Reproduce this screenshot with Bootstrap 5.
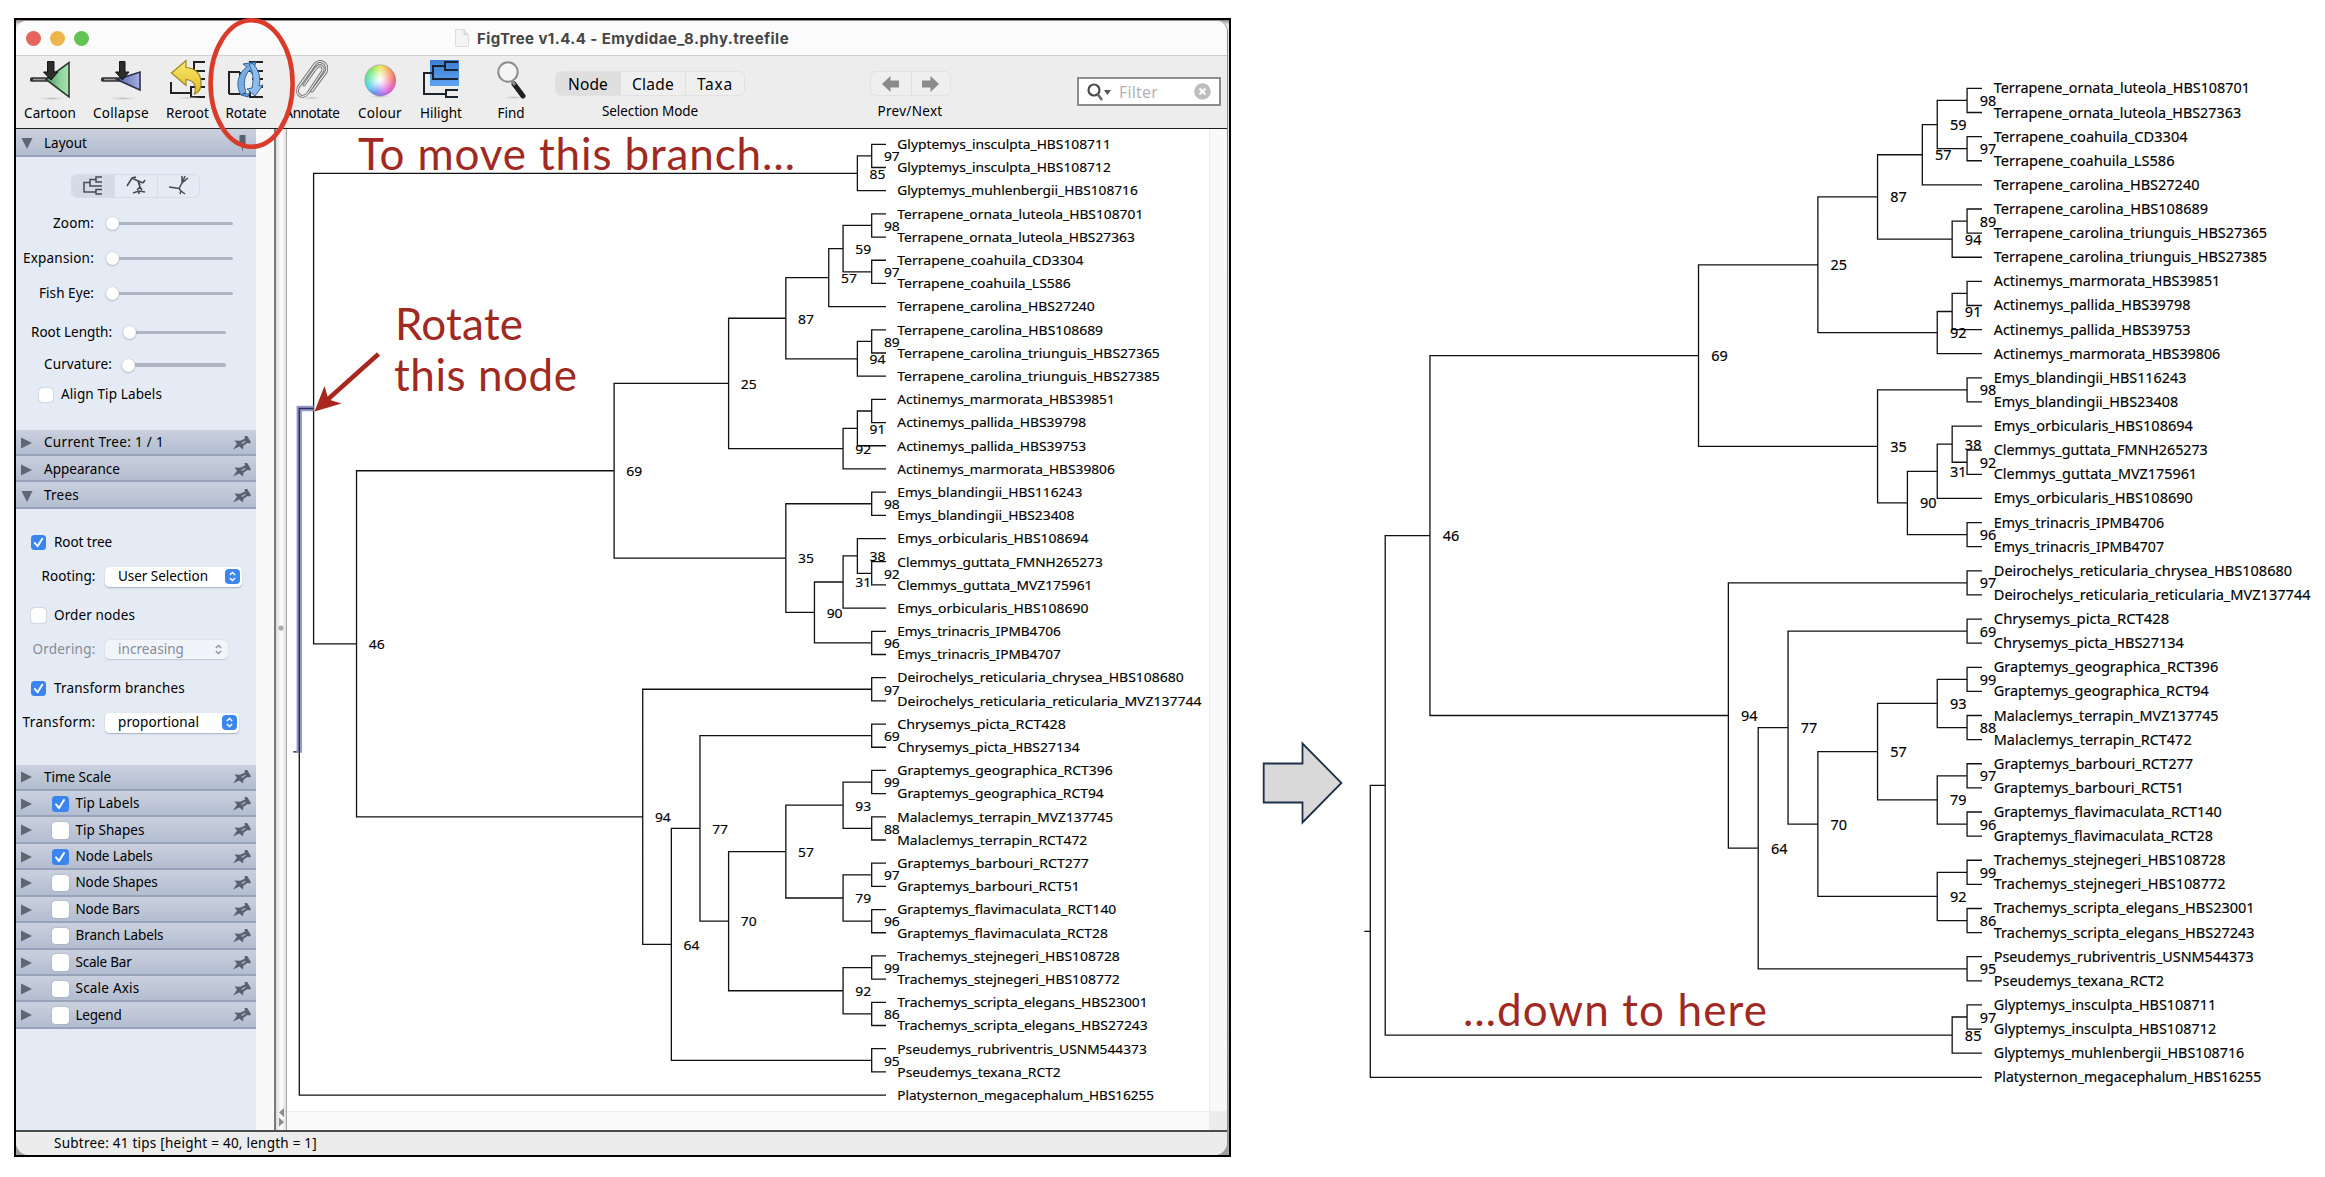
<!DOCTYPE html>
<html lang="en">
<head>
<meta charset="utf-8">
<title>FigTree - rotating a node</title>
<link rel="stylesheet" href="https://cdn.jsdelivr.net/npm/bootstrap@5.3.0/dist/css/bootstrap.min.css">
<style>
body{font-family:"Noto Sans","Open Sans",sans-serif;font-size:13.5px;line-height:1;color:#000;background:#fff;width:2325px;height:1177px;overflow:hidden}
svg{display:block;flex:none}
svg text{white-space:pre}
.page{width:2325px;height:1177px}
.frame{width:1217px;height:1139px;margin:18px 0 0 14px;border:2px solid #000;background:linear-gradient(#8b7f82 0,#b9b2b3 2px,#e6e4e4 5px,#dcdcdc 600px,#a0a0a0 1133px);border-right-width:2px}
.win{width:1212px;height:1134px;margin-top:1px;border-radius:11px 11px 13px 13px;overflow:hidden;border-right:1px solid #8d8d8d;background:#ececec}
.titlebar{height:35px;background:#fbfbfb;border-bottom:1px solid #cfcfcf;flex:none}
.lights{gap:9px;padding-left:10px;width:439px}
.light{width:15px;height:15px;border-radius:50%}
.wtitle{font-family:Inter,Roboto,sans-serif;font-weight:700;font-size:15px;color:#454545}
.tools{height:73px;background:#ededed;border-bottom:1.5px solid #1d1d1d;flex:none}
.tool svg{margin-top:3px}
.tool span,.caption{font-size:13.5px;white-space:nowrap}
.tool span{margin-top:6px}
.seg{height:25px;border:1.5px solid #e2e2e2;border-radius:6px;background:#efefef;overflow:hidden;font-size:15.5px}
.seg>div+div{border-left:1px solid #e0e0e0}
.seg span{padding-top:2px}
.seg .on{background:#dfdfdf}
.caption{margin-top:9px}
.filter{width:144px;height:29px;margin:21px 6px 0 auto;border:2px solid #8c8c8c;background:#fff;color:#b4b4b4;font-size:16px;padding-left:8px}
.side{width:240px;background:#e4ebf5;flex:none}
.hd{height:26.45px;flex:none;background:linear-gradient(#cad0de,#b3bdd0);border-bottom:2px solid #98a3ba;padding:1.5px 5px 0}
.hd.upper{padding-top:3px}
.hd .tri{width:23px;flex:none}
.hd .name{flex:1}
.ck{width:15px;height:15px;border-radius:3.5px;background:#fff;box-shadow:0 0 1.5px #8a93a5;flex:none}
.hd .ck{width:16.5px;height:16.5px;margin:0 7px 0 8px}
.ck.on{background:#3b86ee;box-shadow:none}
.gutter{width:18px;background:#f9f9f9;flex:none}
.split{width:13px;border-left:2px solid #7a7a7a;border-right:1.5px solid #a5a5a5;background:linear-gradient(90deg,#dcdcdc,#fdfdfd 55%,#dedede);flex:none}
.ctl{height:0;white-space:nowrap}
.lab{text-align:right;flex:none}
.track{height:3.5px;border-radius:2px;background:#aeb5c1}
.knob{width:13px;height:13px;border-radius:50%;background:#fff;box-shadow:0 .5px 2px #8f96a3;flex:none;margin-right:-13px;z-index:1}
.sel{height:19.5px;border-radius:4.5px;background:#fff;box-shadow:0 1px 1.5px #a7afbd;padding:0 2px 0 13.5px}
.sel.off{background:#f1f4f9;box-shadow:0 .5px 1.5px #bcc3cf}
.off{color:#868b94}
.layoutseg{width:129px;height:24px;border:1px solid #d5dce7;border-radius:6px;overflow:hidden;margin-left:55px}
.layoutseg>div+div{border-left:1px solid #d5dce7}
.layoutseg .on{background:#d5dbe6}
.canvas{width:922px;background:#fff}
.sbv{width:18px;background:#f9f9f9;border-left:1.5px solid #ececec;height:982px}
.sbh{height:18px;background:#fafafa;border-top:1.5px solid #ececec}
.status{height:25.5px;border-top:2px solid #4c4c4c;background:#ececec;padding-left:38px;flex:none}
.over{position:absolute;left:0;top:0;z-index:5;pointer-events:none}
</style>
<script src="https://cdn.jsdelivr.net/npm/bootstrap@5.3.0/dist/js/bootstrap.bundle.min.js"></script>
</head>
<body>
<svg width="0" height="0" class="position-absolute" aria-hidden="true">
<defs>
<symbol id="pin" viewBox="0 0 18 14"><path d="M0 13.500 4 7.800 1.500 4.600 7.200 4.800 12 2.500 11.500 0H14.200L18 6.200 16.600 7.600 14.500 7 10.400 9.700 10 13.500 6.300 10.600z" fill="#596170"/><path d="M8 6.900 12 4.700 13 5.600 9.300 7.900z" fill="#a9b2c2"/></symbol>
<symbol id="right" viewBox="0 0 11 12"><path d="M0 .5 11 6 0 11.500z" fill="#5f6773"/></symbol>
<symbol id="down" viewBox="0 0 12 11"><path d="M.5 0 11.500 0 6 11z" fill="#5f6773"/></symbol>
<symbol id="tick" viewBox="0 0 16 16"><path d="M4 8.400 7 12 12 4" fill="none" stroke="#fff" stroke-width="2" stroke-linecap="round" stroke-linejoin="round"/></symbol>
<symbol id="step" viewBox="0 0 15 15"><rect width="15" height="15" rx="4" fill="#3d86ec"/><path d="M4.800 6 7.500 3.500 10.200 6M4.800 9 7.500 11.500 10.200 9" fill="none" stroke="#fff" stroke-width="1.400"/></symbol>
<symbol id="stepoff" viewBox="0 0 15 15"><path d="M4.800 6 7.500 3.500 10.200 6M4.800 9 7.500 11.500 10.200 9" fill="none" stroke="#8c929c" stroke-width="1.300"/></symbol>
<linearGradient id="gG"><stop offset="0" stop-color="#4d8f5d"/><stop offset=".6" stop-color="#8ed39b"/><stop offset="1" stop-color="#a9e2b2"/></linearGradient>
<linearGradient id="gB"><stop offset="0" stop-color="#5d6bb0"/><stop offset="1" stop-color="#a4afe2"/></linearGradient>
<linearGradient id="gY" x2="0" y2="1"><stop offset="0" stop-color="#f9ea6e"/><stop offset="1" stop-color="#e2bd28"/></linearGradient>
<linearGradient id="gH" x2="0" y2="1"><stop offset="0" stop-color="#3c7fd2"/><stop offset="1" stop-color="#5fa2f0"/></linearGradient>
<radialGradient id="gW"><stop offset="0" stop-color="#fff"/><stop offset=".3" stop-color="#fff" stop-opacity=".75"/><stop offset="1" stop-color="#fff" stop-opacity="0"/></radialGradient>
<radialGradient id="gS"><stop offset="0" stop-color="#bbb"/><stop offset="1" stop-color="#ececec" stop-opacity="0"/></radialGradient>
</defs>
</svg>

<div class="page d-flex position-relative">
  <div class="frame flex-shrink-0">
    <div class="win d-flex flex-column">
      <div class="titlebar d-flex align-items-center">
        <div class="lights d-flex"><div class="light" style="background:#e5655d"></div><div class="light" style="background:#edb64b"></div><div class="light" style="background:#62c354"></div></div>
        <svg width="14" height="18" viewBox="0 0 14 18"><path d="M.5.5H9L13.500 5.500V17.500H.5z" fill="#f4f4f4" stroke="#dedede"/><path d="M9 .5V5.500H13.500" fill="#e4e4e4" stroke="#d4d4d4"/></svg>
        <span class="wtitle text-nowrap ms-2" data-w="312">FigTree v1.4.4 - Emydidae_8.phy.treefile</span>
      </div>

      <div class="tools d-flex">
        <div class="tool d-flex flex-column align-items-center" style="width:68px"><svg width="40" height="42" viewBox="0 0 40 42"><ellipse cx="22" cy="39.500" rx="18" ry="2" fill="url(#gS)"/><path d="M2 20.500H20" stroke="#333" stroke-width="4.500" stroke-linecap="round"/><path d="M3 20.500H20" stroke="#999" stroke-width="1.600"/><path d="M16 20.500 39 3.500V38z" fill="url(#gG)" stroke="#2d3b30" stroke-width="1.600"/><path d="M17.500 2.500H24V13H28L21 21 13.500 13H17.500z" fill="#2c2c2c" stroke="#151515"/></svg><span data-w="52">Cartoon</span></div>
        <div class="tool d-flex flex-column align-items-center" style="width:74px"><svg width="40" height="42" viewBox="0 0 40 42"><ellipse cx="22" cy="39.500" rx="18" ry="2" fill="url(#gS)"/><path d="M2 20.500H20" stroke="#333" stroke-width="4.500" stroke-linecap="round"/><path d="M3 20.500H20" stroke="#999" stroke-width="1.600"/><path d="M16 20.500 39 13V31z" fill="url(#gB)" stroke="#2d3048" stroke-width="1.600"/><path d="M18.500 2.500H24V13H28L21.500 21 14.500 13H18.500z" fill="#2c2c2c" stroke="#151515"/></svg><span data-w="56">Collapse</span></div>
        <div class="tool d-flex flex-column align-items-center" style="width:59px"><svg width="36" height="42" viewBox="0 0 36 42"><path d="M1 23V34H21M35 3H24V12H35M24 12V20H35M35 28H21V38H35" fill="none" stroke="#222" stroke-width="2"/><ellipse cx="17" cy="39" rx="14" ry="1.500" fill="url(#gS)"/><path d="M1.500 14 16 1.500V8.500C26 9 32 16 31 26 30.500 31 28 34 24.500 35 27 27 24 21 16 20.500V26.500z" fill="url(#gY)" stroke="#9c8526" stroke-width="1.200"/></svg><span data-w="43">Reroot</span></div>
        <div class="tool d-flex flex-column align-items-center" style="width:58px"><svg width="36" height="42" viewBox="0 0 36 42"><path d="M1 35V13H12M1 35H22M12 13V22M35 3H22V12H35M24 20H35M24 28H35M35 38H22V30" fill="none" stroke="#222" stroke-width="2"/><path d="M13 36C7 26 10 14 19 8L15 5 28 3 24 15 21.500 11C16 17 15 26 18 33z" fill="#79ade2" stroke="#2f659d"/><path d="M24 4C31 10 33 19 31 27L35 26 27 37 19 30 24 29C26 20 25 12 21 6z" fill="#8fbdeb" stroke="#2f659d"/><path d="M13 36 20 38 22 33" fill="#5d98d2" stroke="#2f659d"/></svg><span data-w="41">Rotate</span></div>
        <div class="tool d-flex flex-column align-items-center" style="width:74px"><svg width="34" height="42" viewBox="0 0 34 42"><ellipse cx="16" cy="39" rx="13" ry="2" fill="url(#gS)"/><g fill="none" stroke-linecap="round"><path d="M9 26 21 9C25 4 30 8 27 13L13 34C8 41-1 36 4 27L20 5C24 0 34 3 31 13L17 32" stroke="#6c6c6c" stroke-width="3"/><path d="M9 26 21 9C25 4 30 8 27 13L13 34C8 41-1 36 4 27L20 5C24 0 34 3 31 13L17 32" stroke="#e3e3e3" stroke-width="1.300"/></g></svg><span data-w="55">Annotate</span></div>
        <div class="tool d-flex flex-column align-items-center" style="width:62px"><svg width="34" height="42" viewBox="0 0 34 42"><ellipse cx="17" cy="37.500" rx="14" ry="2" fill="url(#gS)"/><foreignObject x="1.500" y="5.500" width="31" height="31"><div style="width:31px;height:31px;border-radius:50%;background:conic-gradient(#e9e54a,#f79a4a,#f2625f,#ee4fae,#c45cf0,#5a7cf2,#45c8ef,#3fe0a0,#6fe64b,#e9e54a)"></div></foreignObject><circle cx="17" cy="21" r="15.500" fill="url(#gW)"/><circle cx="17" cy="21" r="15.300" fill="none" stroke="#9a8f98" stroke-width=".6"/></svg><span data-w="44">Colour</span></div>
        <div class="tool d-flex flex-column align-items-center" style="width:60px"><svg width="38" height="42" viewBox="0 0 38 42"><rect x="8" y="1" width="29" height="26" fill="url(#gH)"/><path d="M36 3H23V11H36M23 7H11V20H36M11 14H2V35H24M36 31H24V38H36" fill="none" stroke="#1a2430" stroke-width="2"/></svg><span data-w="42">Hilight</span></div>
        <div class="tool d-flex flex-column align-items-center" style="width:80px"><svg width="30" height="42" viewBox="0 0 30 42"><ellipse cx="18" cy="38.500" rx="13" ry="2" fill="url(#gS)"/><path d="M18 25 27 37" stroke="#1f1f1f" stroke-width="5" stroke-linecap="round"/><path d="M16 22 19 26" stroke="#888" stroke-width="3"/><circle cx="12" cy="13" r="9.700" fill="#f5f5f5" stroke="#8c8c8c" stroke-width="2"/></svg><span data-w="27">Find</span></div>
        <div class="d-flex flex-column align-items-center" style="width:198px;padding-top:15px"><div class="seg d-flex align-items-stretch" style="width:190px"><div class="on d-flex align-items-center justify-content-center" style="width:64px"><span data-w="40">Node</span></div><div class="d-flex align-items-center justify-content-center" style="width:65px"><span data-w="42">Clade</span></div><div class="d-flex align-items-center justify-content-center flex-fill"><span data-w="36">Taxa</span></div></div><span class="caption" data-w="96">Selection Mode</span></div>
        <div class="d-flex flex-column align-items-center" style="width:120px;margin-left:101px;padding-top:15px"><div class="seg d-flex" style="width:81px"><div class="d-flex align-items-center justify-content-center" style="width:40px"><svg width="17" height="16" viewBox="0 0 17 16"><path d="M0 8 8.500 0V4.500H17V11.500H8.500V16z" fill="#8b8b8b"/></svg></div><div class="d-flex align-items-center justify-content-center flex-fill"><svg width="17" height="16" viewBox="0 0 17 16"><path d="M17 8 8.500 0V4.500H0V11.500H8.500V16z" fill="#8b8b8b"/></svg></div></div><span class="caption" data-w="65">Prev/Next</span></div>
        <div class="filter d-flex align-items-center"><svg width="24" height="18" viewBox="0 0 24 18"><circle cx="7" cy="7" r="5.500" fill="none" stroke="#4c4c4c" stroke-width="2.200"/><path d="M10.500 11 15 17" stroke="#6b6b6b" stroke-width="2.600"/><path d="M17 7H24L20.500 12z" fill="#555"/></svg><span class="ms-2" data-w="39">Filter</span><svg class="ms-auto me-2" width="17" height="17" viewBox="0 0 17 17"><circle cx="8.500" cy="8.500" r="8.300" fill="#bdbdbd"/><path d="M5.500 5.500 11.500 11.500M11.500 5.500 5.500 11.500" stroke="#fff" stroke-width="2"/></svg></div>
      </div>

      <div class="d-flex flex-fill">
        <div class="side d-flex flex-column">
          <div class="hd upper d-flex align-items-center" style="height:27.500px"><div class="tri"><svg width="12" height="11"><use href="#down"/></svg></div><span class="name"><span data-w="43">Layout</span></span><svg class="me-1" width="9" height="17" viewBox="0 0 9 17"><path d="M1.500 0H7.500V8L9 11H5.500L4.500 17 3.500 11H0L1.500 8z" fill="#596170"/></svg></div>
          <div style="height:273px;padding-top:17px">
            <div class="layoutseg d-flex">
              <div class="on d-flex align-items-center justify-content-center" style="width:42px"><svg width="20" height="19" viewBox="0 0 20 19"><path d="M19 1H13V6H19M13 3.500H7V10H19M7 6.500H1V16H13M19 13.500H13V18H19" fill="none" stroke="#454b55" stroke-width="1.500"/></svg></div>
              <div class="d-flex align-items-center justify-content-center" style="width:43px"><svg width="20" height="19" viewBox="0 0 20 19"><path d="M1 10 6 2 10 1M6 2 10 4 17 7M14 9 12 5M12 5 14 11 11 14M14 11 16 14M7 17 13 15 19 16M13 15V18M17 7 19 4" fill="none" stroke="#454b55" stroke-width="1.600"/></svg></div>
              <div class="d-flex align-items-center justify-content-center flex-fill"><svg width="20" height="19" viewBox="0 0 20 19"><path d="M0 11 10 12.500 13 7 19 2M13 7V0M14 5 16 0M10 12.500 12 15 11 18M12 15 16 18" fill="none" stroke="#454b55" stroke-width="1.500"/></svg></div>
            </div>
            <div class="ctl d-flex align-items-center" style="margin-top:26px"><div class="lab" style="width:78px"><span data-w="41">Zoom:</span></div><div class="knob" style="margin-left:12px"></div><div class="track" style="width:127px"></div></div>
            <div class="ctl d-flex align-items-center" style="margin-top:35px"><div class="lab" style="width:78px"><span data-w="71">Expansion:</span></div><div class="knob" style="margin-left:12px"></div><div class="track" style="width:127px"></div></div>
            <div class="ctl d-flex align-items-center" style="margin-top:35px"><div class="lab" style="width:78px"><span data-w="55">Fish Eye:</span></div><div class="knob" style="margin-left:12px"></div><div class="track" style="width:127px"></div></div>
            <div class="ctl d-flex align-items-center" style="margin-top:39px"><div class="lab" style="width:96px"><span data-w="81">Root Length:</span></div><div class="knob" style="margin-left:11px"></div><div class="track" style="width:103px"></div></div>
            <div class="ctl d-flex align-items-center" style="margin-top:32.500px"><div class="lab" style="width:96px"><span data-w="68">Curvature:</span></div><div class="knob" style="margin-left:10px"></div><div class="track" style="width:104px"></div></div>
            <div class="ctl d-flex align-items-center" style="margin-top:30px;padding-left:23px"><div class="ck me-2" style="width:14px;height:14px"></div><span data-w="101">Align Tip Labels</span></div>
          </div>
          <div class="hd upper d-flex align-items-center"><div class="tri"><svg width="11" height="12"><use href="#right"/></svg></div><span class="name"><span data-w="120">Current Tree: 1 / 1</span></span><svg width="18" height="14"><use href="#pin"/></svg></div>
          <div class="hd upper d-flex align-items-center"><div class="tri"><svg width="11" height="12"><use href="#right"/></svg></div><span class="name"><span data-w="76">Appearance</span></span><svg width="18" height="14"><use href="#pin"/></svg></div>
          <div class="hd upper d-flex align-items-center"><div class="tri"><svg width="12" height="11"><use href="#down"/></svg></div><span class="name"><span data-w="35">Trees</span></span><svg width="18" height="14"><use href="#pin"/></svg></div>
          <div style="height:255.700px;padding-top:33.500px">
            <div class="ctl d-flex align-items-center" style="padding-left:15px"><div class="ck on me-2"><svg width="15" height="15"><use href="#tick"/></svg></div><span data-w="58">Root tree</span></div>
            <div class="ctl d-flex align-items-center" style="margin-top:34.500px"><div class="lab" style="width:79.500px"><span data-w="54">Rooting:</span></div><div class="sel d-flex align-items-center justify-content-between" style="width:137px;margin-left:9px"><span data-w="90">User Selection</span><svg width="15" height="15"><use href="#step"/></svg></div></div>
            <div class="ctl d-flex align-items-center" style="padding-left:15px;margin-top:39px"><div class="ck me-2"></div><span data-w="81">Order nodes</span></div>
            <div class="ctl d-flex align-items-center off" style="margin-top:33.500px"><div class="lab" style="width:79.500px"><span data-w="63">Ordering:</span></div><div class="sel off d-flex align-items-center justify-content-between" style="width:123px;margin-left:9px"><span data-w="66">increasing</span><svg width="15" height="15"><use href="#stepoff"/></svg></div></div>
            <div class="ctl d-flex align-items-center" style="padding-left:15px;margin-top:39px"><div class="ck on me-2"><svg width="15" height="15"><use href="#tick"/></svg></div><span data-w="131">Transform branches</span></div>
            <div class="ctl d-flex align-items-center" style="margin-top:34.500px"><div class="lab" style="width:79.500px"><span data-w="73">Transform:</span></div><div class="sel d-flex align-items-center justify-content-between" style="width:134px;margin-left:9px"><span data-w="81">proportional</span><svg width="15" height="15"><use href="#step"/></svg></div></div>
          </div>
          <div class="hd d-flex align-items-center"><div class="tri"><svg width="11" height="12"><use href="#right"/></svg></div><span class="name"><span data-w="67">Time Scale</span></span><svg width="18" height="14"><use href="#pin"/></svg></div>
          <div id="sections"></div>
        </div>
        <div class="gutter"></div>
        <div class="split d-flex flex-column align-items-center"><svg width="9" height="1000" viewBox="0 0 9 1000"><circle cx="4" cy="499" r="2.600" fill="#aaa"/><path d="M7 979V988L2 983.500zM2 988.500V997.500L7 993z" fill="#8c8c8c"/></svg></div>
        <div class="canvas"><svg id="before" width="922" height="982" viewBox="287.800 129.500 922 982"></svg><div class="sbh"></div></div>
        <div class="sbv"></div>
      </div>
      <div class="status d-flex align-items-center"><span data-w="263">Subtree: 41 tips [height = 40, length = 1]</span></div>
    </div>
  </div>
  <svg id="after" width="1094" height="1177" viewBox="1231 0 1094 1177"><path d="M1263.700 763.500H1302.500V743.500L1341.400 783 1302.500 822.500V802.500H1263.700z" fill="#d9d9d9" stroke="#1d3048" stroke-width="1.800"/></svg>

  <svg class="over" width="2325" height="1177">
    <ellipse cx="251.600" cy="83.500" rx="41" ry="63.200" fill="none" stroke="#da3b2b" stroke-width="4.600"/>
    <g fill="#a02a22" font-family="Lato, sans-serif" font-size="44">
      <text x="358" y="169.500" textLength="437">To move this branch…</text>
      <text x="395" y="339.800" textLength="128">Rotate</text>
      <text x="394" y="391.200" textLength="183">this node</text>
      <text x="1463" y="1026" textLength="304">…down to here</text>
    </g>
    <path d="M378.500 354 326 401" stroke="#a8261e" stroke-width="4.500"/>
    <path d="M314.500 411.500 324.500 386 328.500 399.500 341.500 403.500z" fill="#a8261e"/>
  </svg>
</div>

<script>
// Every tip is [name, label width]; every inner node is {s: support, c: [upper child, lower child]}.
const n = (s, a, b) => ({s, c: [a, b]});
const glyptemys = n(85, n(97, ['Glyptemys_insculpta_HBS108711', 213], ['Glyptemys_insculpta_HBS108712', 213]), ['Glyptemys_muhlenbergii_HBS108716', 240]);
const terrapene = n(87,
  n(57, n(59, n(98, ['Terrapene_ornata_luteola_HBS108701', 245.5], ['Terrapene_ornata_luteola_HBS27363', 237]),
               n(97, ['Terrapene_coahuila_CD3304', 185.7], ['Terrapene_coahuila_LS586', 173])),
        ['Terrapene_carolina_HBS27240', 197]),
  n(94, n(89, ['Terrapene_carolina_HBS108689', 205.3], ['Terrapene_carolina_triunguis_HBS27365', 262]), ['Terrapene_carolina_triunguis_HBS27385', 262]));
const actinemys = n(92, n(91, n('', ['Actinemys_marmorata_HBS39851', 217], ['Actinemys_pallida_HBS39798', 188.3]), ['Actinemys_pallida_HBS39753', 188.3]), ['Actinemys_marmorata_HBS39806', 217]);
const emys = n(35, n(98, ['Emys_blandingii_HBS116243', 184.5], ['Emys_blandingii_HBS23408', 176.5]),
  n(90, n(31, n(38, ['Emys_orbicularis_HBS108694', 190.7], n(92, ['Clemmys_guttata_FMNH265273', 205], ['Clemmys_guttata_MVZ175961', 194.7])), ['Emys_orbicularis_HBS108690', 190.7]),
        n(96, ['Emys_trinacris_IPMB4706', 163], ['Emys_trinacris_IPMB4707', 163])));
const graptemys = n(57,
  n(93, n(99, ['Graptemys_geographica_RCT396', 215], ['Graptemys_geographica_RCT94', 206]), n(88, ['Malaclemys_terrapin_MVZ137745', 215.3], ['Malaclemys_terrapin_RCT472', 189.5])),
  n(79, n(97, ['Graptemys_barbouri_RCT277', 191], ['Graptemys_barbouri_RCT51', 182]), n(96, ['Graptemys_flavimaculata_RCT140', 218.5], ['Graptemys_flavimaculata_RCT28', 210])));
const trachemys = n(92, n(99, ['Trachemys_stejnegeri_HBS108728', 222], ['Trachemys_stejnegeri_HBS108772', 222]), n(86, ['Trachemys_scripta_elegans_HBS23001', 250], ['Trachemys_scripta_elegans_HBS27243', 250]));
const deiro = n(94, n(97, ['Deirochelys_reticularia_chrysea_HBS108680', 286], ['Deirochelys_reticularia_reticularia_MVZ137744', 303.7]),
  n(64, n(77, n(69, ['Chrysemys_picta_RCT428', 168], ['Chrysemys_picta_HBS27134', 182]), n(70, graptemys, trachemys)),
        n(95, ['Pseudemys_rubriventris_USNM544373', 249], ['Pseudemys_texana_RCT2', 163])));
const ingroup = n(46, n(69, n(25, terrapene, actinemys), emys), deiro);
const outgroup = ['Platysternon_megacephalum_HBS16255', 256.3];

function drawTree(id, root, o) {
  let row = 0, lines = '', labels = '';
  const text = (x, y, w, t) => `<text x="${x}" y="${y + 4.8 * o.k}" textLength="${w * o.k}" lengthAdjust="spacingAndGlyphs">${t}</text>`;
  function walk(node) {
    if (Array.isArray(node)) {
      const y = o.y + o.dy * row++;
      labels += text(o.x + 11.3 * o.k, y, node[1] + .5, node[0]);
      return {x: o.x, y, tips: 1};
    }
    const [a, b] = node.c.map(walk), tips = a.tips + b.tips;
    const x = o.x - (tips - 1) * o.dx, y = (a.y + b.y) / 2;
    lines += `M${a.x} ${a.y}H${x}V${b.y}H${b.x}`;
    if (node.s) labels += text(x + 12.2 * o.k, y + .5, 15.9, node.s);
    node.kids = [a, b];
    return {x, y, tips};
  }
  const r = walk(root);
  lines += `M${r.x} ${r.y}H${r.x - 6}`;
  let sel = '';
  if (o.selected) {
    const k = root.kids[0], d = `M${k.x} ${k.y}H${r.x}V${r.y + 1}`;
    sel = `<path d="${d}" fill="none" stroke="#979dc6" stroke-width="5.5"/><path d="${d}" fill="none" stroke="#2a2c66" stroke-width="1.5"/>`;
  }
  document.getElementById(id).insertAdjacentHTML('beforeend',
    `<path d="${lines}" fill="none" stroke="#111" stroke-width="1.3"/>${sel}<g font-size="${13.3 * o.k}" fill="#000" stroke="#000" stroke-width=".15">${labels}</g>`);
}
drawTree('before', n('', n('', glyptemys, ingroup), outgroup), {x: 886.8, y: 144.8, dx: 14.31, dy: 23.19, k: 1, selected: true});
drawTree('after', n('', n('', ingroup, glyptemys), outgroup), {x: 1982, y: 88.4, dx: 14.92, dy: 24.12, k: 1.0415});

// Collapsible sidebar sections that carry their own checkbox.
document.getElementById('sections').innerHTML = [['Tip Labels', 1, 64], ['Tip Shapes', 0, 69], ['Node Labels', 1, 77], ['Node Shapes', 0, 82], ['Node Bars', 0, 64], ['Branch Labels', 0, 88], ['Scale Bar', 0, 56], ['Scale Axis', 0, 64], ['Legend', 0, 46]]
  .map(([t, on, w]) => `<div class="hd d-flex align-items-center"><div class="tri"><svg width="11" height="12"><use href="#right"/></svg></div><div class="ck ${on ? 'on' : ''}">${on ? '<svg width="16" height="16"><use href="#tick"/></svg>' : ''}</div><span class="name"><span data-w="${w}">${t}</span></span><svg width="18" height="14"><use href="#pin"/></svg></div>`).join('');

// Track each label out to its nominal width.
document.querySelectorAll('[data-w]').forEach(e => {
  const w = e.getBoundingClientRect().width;
  e.style.letterSpacing = ((e.dataset.w - w) / e.textContent.length).toFixed(3) + 'px';
});
</script>
</body>
</html>
